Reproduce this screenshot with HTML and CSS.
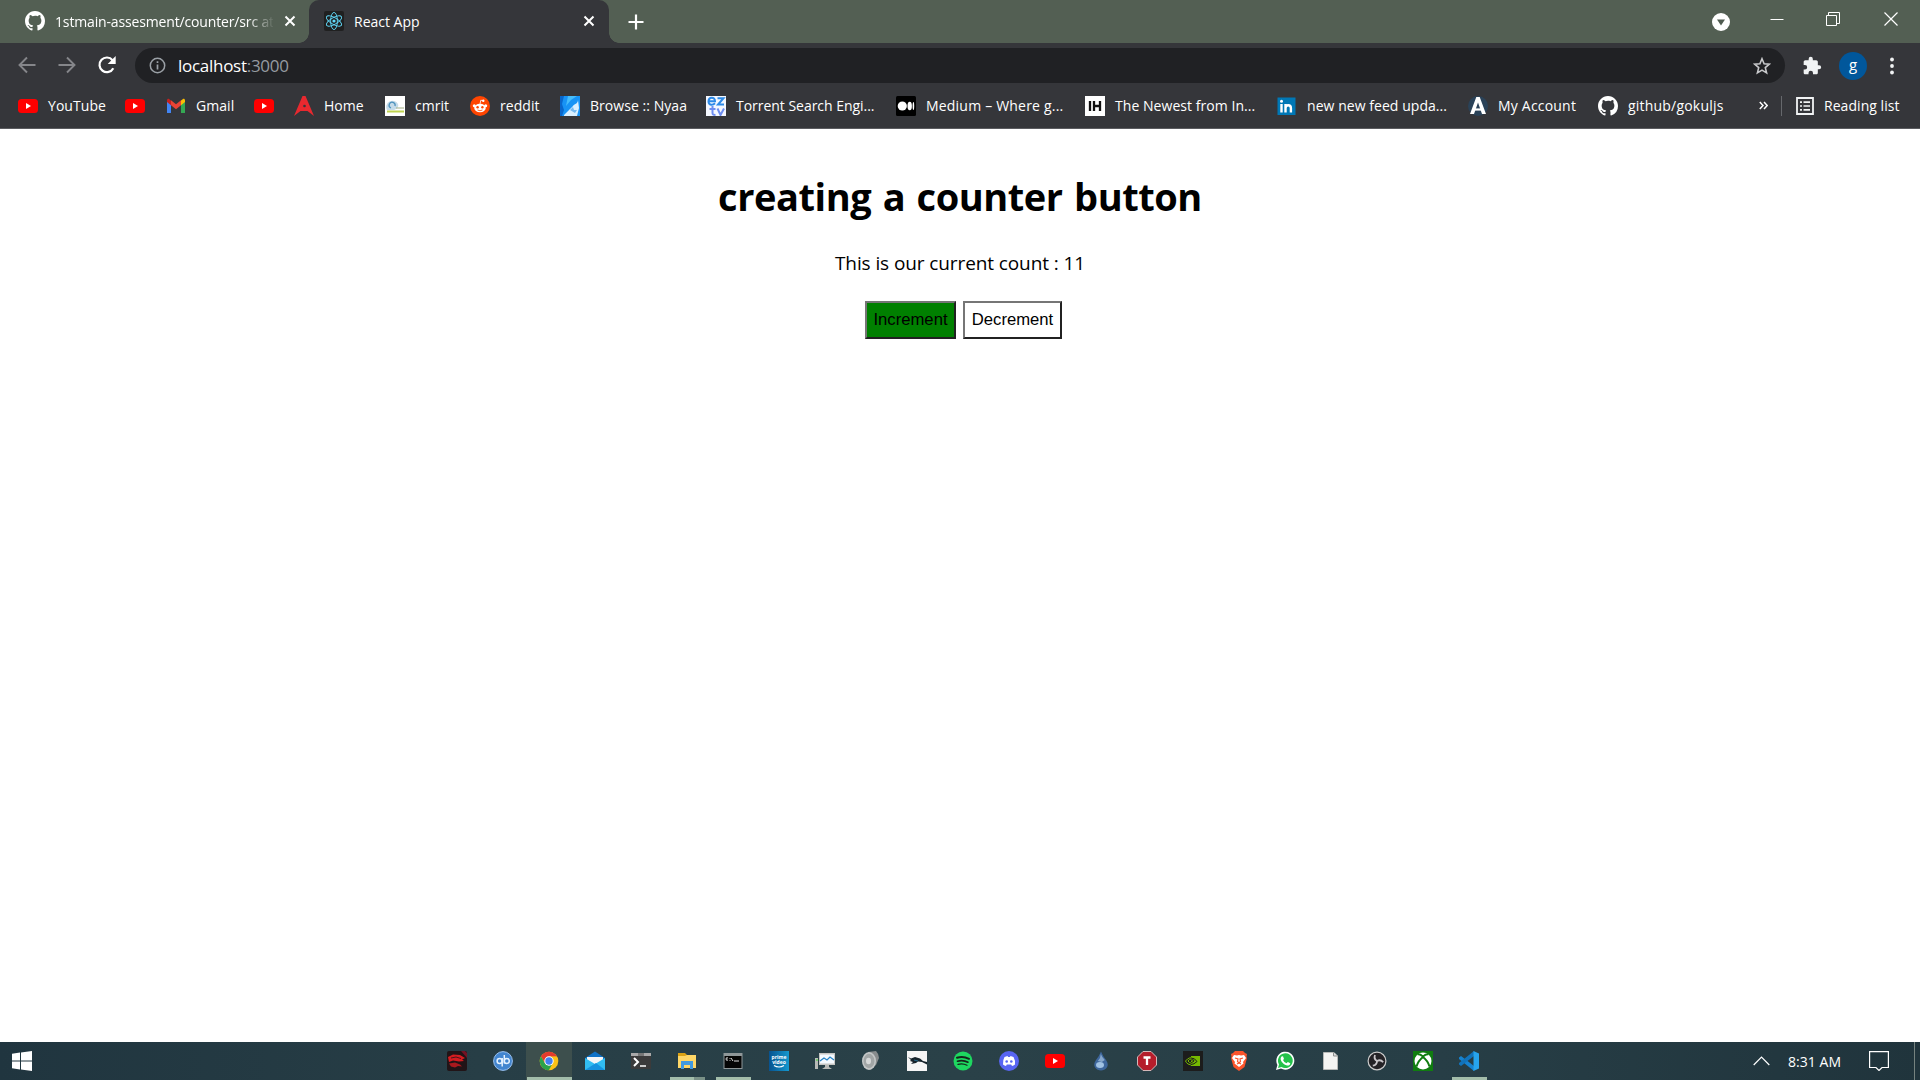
FILE: index.html
```html
<!DOCTYPE html>
<html lang="en">
<head>
<meta charset="utf-8">
<title>React App</title>
<link rel="stylesheet" href="styles.css">
</head>
<body>
<svg class="sprite" width="0" height="0">
  <symbol id="github" viewBox="0 0 16 16"><path fill="#fff" d="M8 0C3.58 0 0 3.58 0 8c0 3.54 2.29 6.53 5.47 7.59.4.07.55-.17.55-.38 0-.19-.01-.82-.01-1.49-2.01.37-2.53-.49-2.69-.94-.09-.23-.48-.94-.82-1.13-.28-.15-.68-.52-.01-.53.63-.01 1.08.58 1.23.82.72 1.21 1.87.87 2.33.66.07-.52.28-.87.51-1.07-1.78-.2-3.64-.89-3.64-3.95 0-.87.31-1.59.82-2.15-.08-.2-.36-1.02.08-2.12 0 0 .67-.21 2.2.82A7.65 7.65 0 0 1 8 3.86c.68 0 1.36.09 2 .27 1.53-1.04 2.2-.82 2.2-.82.44 1.1.16 1.92.08 2.12.51.56.82 1.27.82 2.15 0 3.07-1.87 3.75-3.65 3.95.29.25.54.73.54 1.48 0 1.07-.01 1.93-.01 2.2 0 .21.15.46.55.38A8.01 8.01 0 0 0 16 8c0-4.42-3.58-8-8-8z"/></symbol>
  <symbol id="youtube" viewBox="0 0 20 20"><rect y="3" width="20" height="14" rx="3.5" fill="#f00"/><path d="M8 7l5 3-5 3z" fill="#fff"/></symbol>
  <symbol id="close" viewBox="0 0 12 12"><path d="M1.5 1.500l9 9M10.500 1.500l-9 9" stroke="#fff" stroke-width="2" fill="none"/></symbol>
</svg>

<header class="browser">
  <div class="tabstrip">
    <div class="tab tab-first">
      <svg class="ico"><use href="#github"/></svg>
      <span class="tab-title faded">1stmain-assesment/counter/src at</span>
      <svg class="x"><use href="#close"/></svg>
    </div>
    <div class="tab tab-active">
      <svg class="ico" viewBox="0 0 20 20"><rect width="20" height="20" rx="2" fill="#202020"/><g fill="none" stroke="#61dafb" stroke-width=".9"><ellipse cx="10" cy="10" rx="3.400" ry="8.600"/><ellipse cx="10" cy="10" rx="3.400" ry="8.600" transform="rotate(60 10 10)"/><ellipse cx="10" cy="10" rx="3.400" ry="8.600" transform="rotate(120 10 10)"/></g><circle cx="10" cy="10" r="1.600" fill="#61dafb"/></svg>
      <span class="tab-title">React App</span>
      <svg class="x"><use href="#close"/></svg>
    </div>
    <svg class="plus" viewBox="0 0 16 16"><path d="M8 .5v15M.5 8h15" stroke="#fff" stroke-width="2.200"/></svg>
    <div class="window-controls">
      <svg width="18" height="18" viewBox="0 0 18 18"><circle cx="9" cy="9" r="9" fill="#fff"/><path d="M5 6.500h8L9 12.500z" fill="#4f5b50"/></svg>
      <svg width="14" height="14" viewBox="0 0 14 14"><path d="M.5 7.500h13" stroke="#fff"/></svg>
      <svg width="14" height="14" viewBox="0 0 14 14"><path d="M.5 3.500h10v10h-10zM2.500 3V.5h11v11H11" stroke="#fff" fill="none"/></svg>
      <svg width="14" height="14" viewBox="0 0 14 14"><path d="M.5.5l13 13M13.500.5l-13 13" stroke="#fff" stroke-width="1.200"/></svg>
    </div>
  </div>

  <div class="toolbar">
    <svg class="nav" viewBox="0 0 20 20"><path d="M18.500 10H3M10 2.500L2.500 10l7.500 7.500" fill="none" stroke="#85868a" stroke-width="1.900"/></svg>
    <svg class="nav" viewBox="0 0 20 20"><path d="M1.500 10H17M10 2.500l7.500 7.500-7.500 7.500" fill="none" stroke="#85868a" stroke-width="1.900"/></svg>
    <svg class="nav" viewBox="0 0 20 20"><path d="M16.300 13.200A7.300 7.300 0 1 1 15.500 5.200L17 7" fill="none" stroke="#fff" stroke-width="2.200"/><path d="M18.700 1v8h-8z" fill="#fff"/></svg>
    <div class="omnibox">
      <svg width="17" height="17" viewBox="0 0 17 17"><circle cx="8.500" cy="8.500" r="7.200" fill="none" stroke="#9aa0a6" stroke-width="1.500"/><path d="M8.500 7.500v5M8.500 4.300v1.800" stroke="#9aa0a6" stroke-width="1.700"/></svg>
      <span class="url">localhost<span class="port">:3000</span></span>
      <svg class="star" width="18" height="18" viewBox="0 0 18 18"><path d="M9 1.700l2.100 5 5.300.4-4.100 3.500 1.300 5.300L9 13.100l-4.600 2.800 1.300-5.300L1.600 7.100l5.300-.4z" fill="none" stroke="#c8c9cb" stroke-width="1.600"/></svg>
    </div>
    <svg class="puzzle" viewBox="0 0 24 24"><path fill="#f1f3f4" d="M20.500 11H19V7c0-1.100-.9-2-2-2h-4V3.500a2.500 2.500 0 0 0-5 0V5H4c-1.100 0-2 .9-2 2v3.800h1.500a2.700 2.700 0 0 1 0 5.400H2V20c0 1.100.9 2 2 2h3.800v-1.500a2.700 2.700 0 0 1 5.400 0V22H17c1.100 0 2-.9 2-2v-4h1.500a2.500 2.500 0 0 0 0-5z"/></svg>
    <span class="avatar">g</span>
    <svg class="menu" viewBox="0 0 4 18"><g fill="#f1f3f4"><circle cx="2" cy="2.500" r="1.900"/><circle cx="2" cy="9" r="1.900"/><circle cx="2" cy="15.500" r="1.900"/></g></svg>
  </div>

  <nav class="bookmarks">
    <a class="bm"><svg class="ico"><use href="#youtube"/></svg>YouTube</a>
    <a class="bm"><svg class="ico"><use href="#youtube"/></svg></a>
    <a class="bm"><svg class="ico" viewBox="0 0 20 20"><path d="M1 17V5l4 3v9z" fill="#4285f4"/><path d="M19 17V5l-4 3v9z" fill="#34a853"/><path d="M15 4.500L17 3c1-.5 2 .3 2 1.500V6l-4 3.200z" fill="#fbbc04"/><path d="M5 4.500L3 3c-1-.5-2 .3-2 1.500V6l4 3.200z" fill="#c5221f"/><path d="M5 4.300l5 4 5-4v5l-5 4-5-4z" fill="#ea4335"/></svg>Gmail</a>
    <a class="bm"><svg class="ico"><use href="#youtube"/></svg></a>
    <a class="bm"><svg class="ico" viewBox="0 0 20 20"><path d="M8.500 0h3L20 20l-6.500-5h-7L0 20z" fill="#e8292f"/><circle cx="10.500" cy="10" r="1.300" fill="#35363a"/></svg>Home</a>
    <a class="bm"><svg class="ico" viewBox="0 0 20 20"><path d="M0 0h20v20H0z" fill="#fff"/><path d="M2 14a6 6 0 0 1 11-6c1 3-1 5-4 6z" fill="#c5dbe9"/><path d="M6 12a3 3 0 1 1 4-2" fill="none" stroke="#4c91bd" stroke-width="1.300"/><path d="M11 12h8" stroke="#a1ae83"/><path d="M2 15.500h17" stroke="#bed34f" stroke-width="2"/></svg>cmrit</a>
    <a class="bm"><svg class="ico" viewBox="0 0 20 20"><circle cx="10" cy="10" r="10" fill="#ff4500"/><g fill="#fff"><ellipse cx="10" cy="12" rx="5.800" ry="4.200"/><circle cx="4.300" cy="9.800" r="1.500"/><circle cx="15.700" cy="9.800" r="1.500"/><circle cx="13.300" cy="4.800" r="1.200"/></g><path d="M10 8l.8-3.800 2.500.6" stroke="#fff" fill="none" stroke-width=".8"/><circle cx="7.600" cy="11.300" r="1.200" fill="#ff4500"/><circle cx="12.400" cy="11.300" r="1.200" fill="#ff4500"/><path d="M7.500 14q2.500 1.500 5 0" stroke="#ff4500" fill="none" stroke-width=".8"/></svg>reddit</a>
    <a class="bm"><svg class="ico" viewBox="0 0 20 20"><path d="M0 0h20v20H0z" fill="#1793f5"/><path d="M0 0h4L2 8l2 6-2 6H0z" fill="#0866cb"/><path d="M8 0h9l-6 4-5 6z" fill="#46bdfb"/><path d="M18 4c0 4-4 4-5 6l-3 3-6 6v1h13l2-8z" fill="#d9efff"/><path d="M10 14l3-3 1 3 3 0-2 3z" fill="#75b9ef"/></svg>Browse :: Nyaa</a>
    <a class="bm wide-words"><svg class="ico" viewBox="0 0 20 20"><path d="M0 0h20v20H0z" fill="#f5f8ff"/><g fill="none" stroke="#2d8ae8" stroke-width="2"><path d="M2.500 5.200h6.500c0-5-6.500-4.500-6.500 0s4.500 4 6.500 2M11.500 2.200h6l-5.500 6.300h6"/><path d="M6.500 10v7c0 2 1 2 3 2M3.500 13h6M11.500 12.500l3 6.500 3.500-6.500" stroke="#6d8df1"/></g></svg>Torrent Search Engi...</a>
    <a class="bm extra-wide"><svg class="ico" viewBox="0 0 20 20"><rect width="20" height="20" rx="1.500"/><g fill="#fff"><circle cx="6.300" cy="10" r="4.600"/><ellipse cx="13.700" cy="10" rx="2.200" ry="4.300"/><ellipse cx="17.400" cy="10" rx=".8" ry="4"/></g></svg>Medium – Where g...</a>
    <a class="bm"><svg class="ico" viewBox="0 0 20 20"><path d="M0 0h20v20H0z" fill="#fff"/><path d="M5 5v10M9 5v10M15 5v10M9 10h6" stroke="#111" stroke-width="2.300"/></svg>The Newest from In...</a>
    <a class="bm"><svg class="ico" viewBox="0 0 20 20"><path d="M.5 1.500h18v17.500H.5z" fill="#0077b5"/><path d="M4.500 8v8.500M8.500 8v8.500M8.500 12q0-2.800 2.700-2.800t2.700 2.800v4.500" fill="none" stroke="#fff" stroke-width="2.400"/><circle cx="4.500" cy="5.300" r="1.500" fill="#fff"/></svg>new new feed upda...</a>
    <a class="bm extra-wide"><svg class="ico" viewBox="0 0 20 20"><circle cx="10" cy="10" r="10" fill="#2a4258"/><path d="M8.300 1h3.400L18 18h-4l-4-11.500L6 18H2z" fill="#fff"/><path d="M5 13.500h10" stroke="#fff" stroke-width="2.200"/></svg>My Account</a>
    <a class="bm extra-wide"><svg class="ico"><use href="#github"/></svg>github/gokuljs</a>
    <svg class="more" viewBox="0 0 9 9"><path d="M.8 1L4 4.500.8 8M5 1l3.200 3.500L5 8" fill="none" stroke="#fff" stroke-width="1.500"/></svg>
    <a class="bm reading"><svg width="18" height="18" viewBox="0 0 18 18"><path d="M1 1h16v16H1z" fill="none" stroke="#f1f3f4" stroke-width="1.800"/><path d="M4 5.200h2M4 9h2M4 12.800h2M7.500 5.200H14M7.500 9H14M7.500 12.800H14" stroke="#f1f3f4" stroke-width="1.700"/></svg>Reading list</a>
  </nav>
</header>

<main class="page">
  <h1 class="heading">creating a counter button</h1>
  <p class="count">This is our current count : 11</p>
  <div class="actions">
    <button class="btn increment">Increment</button>
    <button class="btn decrement">Decrement</button>
  </div>
</main>

<footer class="taskbar">
  <svg class="start" viewBox="0 0 20 20"><path fill="#fff" d="M0 2.700L8 1.600v7.900H0zM9 1.500L20 0v9.500H9zM0 10.500h8v7.900l-8-1.100zM9 10.500h11V20L9 18.500z"/></svg>
  <div class="apps">
    <span class="app"><svg class="ico" viewBox="0 0 20 20"><rect width="20" height="20" rx="2" fill="#211417"/><path d="M14 0h4l2 2v5z" fill="#741324"/><path d="M1 6l5-2.500 7 .5 5 3-3 1.500 2 1.500-5 .5-6-1-4 1.500z" fill="#d51c20"/><path d="M2 12.500l6-1 5 2 2 2-4-.5-3 1.500-4-1z" fill="#a9191e"/><path d="M4 7l5-1 5 1.500" stroke="#47151a" fill="none"/></svg></span>
    <span class="app"><svg class="ico" viewBox="0 0 20 20"><circle cx="10" cy="10" r="9.400" fill="#4285cf" stroke="#9ac1ef"/><g fill="none" stroke="#e5f2ff" stroke-width="1.500"><circle cx="6.600" cy="10" r="2.500"/><path d="M9.200 7v8.500M11.300 4v8.500"/><circle cx="13.800" cy="10" r="2.500"/></g></svg></span>
    <span class="app open current"><svg class="ico" viewBox="0 0 20 20"><circle cx="10" cy="10" r="9.300" fill="#fbc116"/><path d="M1.950 5.350A9.300 9.300 0 0 1 18.050 5.350L10 5.600 6 12.300z" fill="#e33b2e"/><path d="M1.950 5.350L6 12.400l7.500 0L9.800 19.300A9.300 9.300 0 0 1 1.950 5.350z" fill="#2ba24c"/><circle cx="10" cy="10" r="4.700" fill="#fff"/><circle cx="10" cy="10" r="3.700" fill="#427ff0"/></svg></span>
    <span class="app"><svg class="ico" viewBox="0 0 20 20"><path d="M0 7l10-6.500L20 7v12H0z" fill="#0f72c7"/><path d="M2 6h16v7H2z" fill="#f4f6f7"/><path d="M0 7l10 6 10-6v12H0z" fill="#31bdf2"/><path d="M0 19l11-7 9 7z" fill="#1693df"/></svg></span>
    <span class="app"><svg class="ico" viewBox="0 0 20 20"><path d="M0 2h20v16H0z" fill="#3b3b3b"/><path d="M0 2h20v3H0z" fill="#a9a9a9"/><path d="M7 2h6v3H7z" fill="#777"/><path d="M3 7l4 4-4 4" stroke="#fff" fill="none" stroke-width="2"/><path d="M9 15h6" stroke="#fff" stroke-width="1.500"/></svg></span>
    <span class="app open split"><svg class="ico" viewBox="0 0 20 20"><path d="M1 2h7l2 2v3H1z" fill="#dca315"/><path d="M1 5h7l2-1h9v13H1z" fill="#ffd767"/><path d="M4 10h12v8h-3v-4H7v4H4z" fill="#409ae1"/></svg></span>
    <span class="app open"><svg class="ico" viewBox="0 0 20 20"><path d="M.5 2h19v16H.5z" fill="#8f9799"/><path d="M1.500 5h17v12h-17z" fill="#050505"/><path d="M5 7q-2-1-2 1t2 1M7 7v.8M7 9v.8M8 7l2 3M11 10h5" stroke="#ddd" fill="none"/></svg></span>
    <span class="app"><svg class="ico" viewBox="0 0 20 20"><defs><linearGradient id="pv"><stop stop-color="#07528f"/><stop offset="1" stop-color="#1498cf"/></linearGradient></defs><path d="M0 0h20v20H0z" fill="url(#pv)"/><text class="prime" x="10" y="7.500">prime</text><text class="prime" x="10" y="12.500">video</text><path d="M5 14.500q5 3 10 0" stroke="#fff" fill="none" stroke-width="1.200"/></svg></span>
    <span class="app"><svg class="ico" viewBox="0 0 20 20"><path d="M4 2h16v12H4z" fill="#c6c6c3"/><path d="M5 3.500h14v9H5z" fill="#f4faff"/><path d="M5 10l4-3 3 2 3-3 4 3" stroke="#2683c6" fill="none" stroke-width="1.200"/><path d="M10 14h4v2l3 2H7l3-2zM0 7h3v11H0z" fill="#b8bab7"/><path d="M1 9h2" stroke="#39d92a"/></svg></span>
    <span class="app"><svg class="ico" viewBox="0 0 20 20"><path d="M7 1l8-1q3 3 3 7l-3 7-6 5z" fill="#888c8d"/><ellipse cx="8" cy="10" rx="7" ry="9" fill="#c4c7c7"/><ellipse cx="8" cy="10" rx="5.500" ry="7.200" fill="#a2a6a6"/><ellipse cx="7.500" cy="10" rx="2.500" ry="3.200" fill="#d6d8d8"/></svg></span>
    <span class="app"><svg class="ico" viewBox="0 0 20 20"><path d="M0 0h20v20H0z" fill="#f5f5f5"/><path d="M1 6l3 1.500L8 6l5 1.500 3 2.500 4 1v2.500l-5-2.500-4-.5-2 1.500-5 1 2-2-3-1 1-1z" fill="#15222a"/><path d="M7 9l4 1" stroke="#276a8c"/></svg></span>
    <span class="app"><svg class="ico" viewBox="0 0 20 20"><circle cx="10" cy="10" r="9.500" fill="#1ed760"/><g fill="none" stroke="#15251b" stroke-linecap="round"><path d="M4 6.800q6-2 12 1" stroke-width="2"/><path d="M4.500 10.200q5.500-1.600 10.500 1" stroke-width="1.600"/><path d="M5 13.300q5-1.200 9 1" stroke-width="1.300"/></g></svg></span>
    <span class="app"><svg class="ico" viewBox="0 0 20 20"><circle cx="10" cy="10" r="10" fill="#5865f2"/><path d="M5.500 6l3-1 .6 1h1.800l.6-1 3 1q2 3.500 1.500 7.500-1.500 1.200-3 1.500l-.8-1.500H7.800L7 15q-1.500-.3-3-1.500Q3.700 9 5.500 6z" fill="#fff"/><circle cx="7.700" cy="10.500" r="1.300" fill="#5865f2"/><circle cx="12.300" cy="10.500" r="1.300" fill="#5865f2"/></svg></span>
    <span class="app"><svg class="ico"><use href="#youtube"/></svg></span>
    <span class="app"><svg class="ico" viewBox="0 0 20 20"><path d="M10 .5q1.500 4 5 8.500c4.500 6-.5 10.500-5 10.500S.5 15 5 9Q8.500 4.500 10 .5z" fill="#3d669c"/><path d="M9.800 3q0 4-3 7l4 1 3-2q-3-3-4-6z" fill="#86a7cb"/><ellipse cx="9" cy="14" rx="4" ry="3" fill="#a0c2e4"/></svg></span>
    <span class="app"><svg class="ico" viewBox="0 0 20 20"><path d="M6 .5h8L19.500 6v8L14 19.500H6L.5 14V6z" fill="#b51d2b" stroke="#d5b8b9"/><path d="M6.500 6.500h7M10 6.500V14" stroke="#fff" stroke-width="2.300"/></svg></span>
    <span class="app"><svg class="ico" viewBox="0 0 20 20"><path d="M0 0h20v20H0z" fill="#1c1c1c"/><path d="M8 5h9v10H8z" fill="#76b900"/><path d="M2.500 10q4-5 8.500-2.500 3 2 3 3-4 5-9 2.500-2-1.500-2.500-3zM5 10q3-4 6 0-3 4-6 0z" fill="none" stroke="#76b900"/><path d="M8 7q4 0 6 3.500-3 3-6 3M8 9q3-1 3 1l-3 2" fill="none" stroke="#1c1c1c"/></svg></span>
    <span class="app"><svg class="ico" viewBox="0 0 20 20"><path d="M6 0h8l2 2 2 1-.5 3 .5 1-2.500 9-5.500 4-5.500-4L2 7l.5-1L2 3l2-1z" fill="#fb542b"/><path d="M5 4l3 .5L10 4l2 .5 3-.5 2 3-3 4 .5 1.500L10 16l-4.500-3.500L6 11 3 7z" fill="#fff"/><path d="M6 7l3 1-.5 2.500L10 12l1.500-1.500L11 8l3-1M8 13l2-1 2 1" fill="none" stroke="#fb542b" stroke-width="1.200"/></svg></span>
    <span class="app"><svg class="ico" viewBox="0 0 20 20"><path d="M1 19l1.400-5A9 9 0 1 1 6 17.600z" fill="#fff"/><path d="M3 17l1-3.500A7.400 7.400 0 1 1 6.500 16z" fill="#25c24b"/><path d="M6.500 5.500l1.500-.2 1 2.700-1 1q1 2.500 3.500 3.300l1.300-1.300 2.500 1.300c0 2-2 2.500-3.300 2.200C8.500 13.500 6 10.500 5.600 8q0-1.500.9-2.500z" fill="#fff"/></svg></span>
    <span class="app"><svg class="ico" viewBox="0 0 20 20"><path d="M2.500 1.500H13l3.500 3.500v13.500h-14z" fill="#f4f4f2" stroke="#b7b9b7"/><path d="M12.500 1.500V5h4" fill="#ddd" stroke="#8b8f8e"/></svg></span>
    <span class="app"><svg class="ico" viewBox="0 0 20 20"><circle cx="10" cy="10" r="8.900" fill="#242226" stroke="#ccc" stroke-width="1.200"/><g fill="none" stroke="#c8c5c9" stroke-width="1.800"><path d="M10 10Q6.500 8 8 4"/><path d="M10 10Q6.500 8 8 4" transform="rotate(120 10 10)"/><path d="M10 10Q6.500 8 8 4" transform="rotate(240 10 10)"/></g></svg></span>
    <span class="app"><svg class="ico" viewBox="0 0 20 20"><path d="M0 0h20v20H0z" fill="#107c10"/><circle cx="10" cy="10" r="8.500" fill="#fff"/><path d="M4.500 3.500q2-.8 5.500 2 3.500-2.800 5.500-2M10 6q-5 4-6.500 9.500M10 6q5 4 6.500 9.500" fill="none" stroke="#107c10" stroke-width="2"/></svg></span>
    <span class="app open"><svg class="ico" viewBox="0 0 20 20"><path d="M0 6.500L2 5l13 10v5L0 8z" fill="#1682cf"/><path d="M0 13.500L2 15l13-10V0L0 12z" fill="#1173bb"/><path d="M14.500 0L20 2.500v15L14.500 20z" fill="#27a4ed"/></svg></span>
  </div>
  <div class="tray">
    <svg width="17" height="10" viewBox="0 0 17 10"><path d="M.7 9L8.500 1l7.800 8" fill="none" stroke="#fff" stroke-width="1.200"/></svg>
    <span class="clock">8:31 AM</span>
    <svg width="20" height="20" viewBox="0 0 20 20"><path d="M.6.6h18.800v15.900H13l-3 3-3-3H.6z" fill="none" stroke="#fff" stroke-width="1.200"/></svg>
    <span class="show-desktop"></span>
  </div>
</footer>
</body>
</html>
```
FILE: styles.css
```css
* { box-sizing: border-box; }

body {
  margin: 0;
  height: 1080px;
  overflow: hidden;
  display: flex;
  flex-direction: column;
  background: #fff;
  font-family: "Open Sans", "Noto Sans", sans-serif;
}

svg { display: block; flex: none; }
.sprite { display: none; }
.ico { width: 20px; height: 20px; }

/* Browser chrome */
.browser {
  height: 129px;
  flex: none;
  background: #35363a;
  border-bottom: 1px solid #5b5c60;
  color: #fff;
}

.tabstrip {
  height: 43px;
  display: flex;
  align-items: center;
  background: #535f53;
}

.tab {
  height: 43px;
  padding-bottom: 1px;
  display: flex;
  align-items: center;
  font-size: 14px;
  letter-spacing: -0.15px;
}

.tab-first {
  width: 309px;
  padding-left: 25px;
  padding-right: 13px;
}

.tab-active {
  position: relative;
  width: 300px;
  padding-left: 15px;
  padding-right: 14px;
  background: #35363a;
  border-radius: 10px 10px 0 0;
  letter-spacing: 0;
}

.tab-active::before,
.tab-active::after {
  content: "";
  position: absolute;
  bottom: 0;
  width: 10px;
  height: 10px;
}
.tab-active::before {
  left: -10px;
  background: radial-gradient(circle at 0 0, transparent 9.5px, #35363a 10px);
}
.tab-active::after {
  right: -10px;
  background: radial-gradient(circle at 100% 0, transparent 9.5px, #35363a 10px);
}

.tab-title {
  flex: 1;
  margin-left: 10px;
  white-space: nowrap;
  overflow: hidden;
}
.faded {
  flex: none;
  width: 218px;
  margin-right: 11px;
  mask-image: linear-gradient(to right, #000 192px, transparent 220px);
}

.x { width: 12px; height: 12px; }
.plus { width: 16px; height: 16px; margin-left: 19px; }

.window-controls {
  margin-left: auto;
  margin-right: 22px;
  display: grid;
  grid-template-columns: 58px 56px 58px 14px;
  align-items: center;
}
.window-controls svg { margin-top: -6px; }
.window-controls svg:first-child { margin-left: 0; margin-top: 1px; }

.toolbar {
  height: 45px;
  padding: 0 24px 0 17px;
  display: flex;
  align-items: center;
}
.nav { width: 20px; height: 20px; margin: -1px 20px 0 0; }
.nav:nth-child(3) { margin-right: 18px; }

.omnibox {
  width: 1650px;
  height: 35px;
  padding: 0 14px 0 14px;
  display: flex;
  align-items: center;
  border-radius: 18px;
  background: #202124;
}
.url { margin-left: 12px; font-size: 17px; letter-spacing: -0.28px; }
.port { color: #969ba1; }
.star { margin-left: auto; }
.puzzle { width: 20px; height: 20px; margin-left: 17px; }
.avatar {
  width: 28px;
  height: 28px;
  margin-left: 17px;
  border-radius: 50%;
  background: #01579b;
  font-size: 15px;
  line-height: 24px;
  text-align: center;
}
.menu { width: 4px; height: 18px; margin-left: 23px; }

.bookmarks {
  height: 35px;
  padding-left: 18px;
  display: grid;
  grid-template-columns: 107px 41px 88px 40px 91px 85px 90px 146px 190px 189px 192px 191px 130px 161px 22px 139px;
  align-items: center;
}
.bm {
  display: flex;
  align-items: center;
  gap: 10px;
  font-size: 14px;
  letter-spacing: 0.05px;
  white-space: nowrap;
}
.bm.wide-words { letter-spacing: -0.03px; }
.bm.extra-wide { letter-spacing: 0.2px; }
.more { width: 9px; height: 9px; }
.bm.reading {
  height: 20px;
  padding-left: 14px;
  border-left: 1px solid #66686c;
}

/* Counter page */
.page {
  height: 913px;
  padding-top: 41px;
  text-align: center;
  color: #000;
}
.heading {
  margin: 0;
  font-size: 38px;
  line-height: 53px;
  letter-spacing: -0.45px;
  word-spacing: 2px;
}
.count {
  margin: 27px 0 0;
  font-size: 19px;
  line-height: 27px;
  letter-spacing: -0.1px;
}
.actions {
  display: flex;
  justify-content: center;
  gap: 7px;
  margin-top: 24px;
  padding-left: 7px;
}
.btn {
  height: 38px;
  padding: 0;
  border: 2px solid;
  border-color: #767676 #212121 #212121 #767676;
  border-radius: 0;
  font: 16.667px "Liberation Sans", Arial, sans-serif;
  color: #000;
}
.increment { width: 91px; background: #008000; }
.decrement { width: 99px; background: #fff; }

/* Taskbar */
.taskbar {
  height: 38px;
  display: flex;
  align-items: center;
  background: linear-gradient(to right, #20353f, #273e46 25%, #2a4148 50%, #273e46 75%, #20343c);
}
.start { width: 20px; height: 20px; margin-left: 12px; }
.apps { display: flex; margin-left: 402px; }
.app {
  width: 46px;
  height: 38px;
  display: flex;
  justify-content: center;
  align-items: center;
  background: linear-gradient(#a3bdaa, #a3bdaa) no-repeat center bottom / 0 3px;
}
.app.open { background-size: 35px 3px; }
.app.current { background-size: 45px 3px; background-color: #3d4f4d; }
.app.split {
  background-image: linear-gradient(to right, #a3bdaa 24px, #7a9187 24px);
}
.prime {
  fill: #fff;
  font-size: 5px;
  font-weight: 700;
  text-anchor: middle;
}

.tray {
  margin-left: auto;
  display: flex;
  align-items: center;
  color: #fff;
}
.clock {
  width: 55px;
  margin: 0 26px 0 18px;
  font-size: 14px;
  letter-spacing: 0.05px;
  white-space: nowrap;
}
.show-desktop {
  width: 6px;
  height: 38px;
  margin-left: 25px;
  border-left: 1px solid #75827f;
}
```
